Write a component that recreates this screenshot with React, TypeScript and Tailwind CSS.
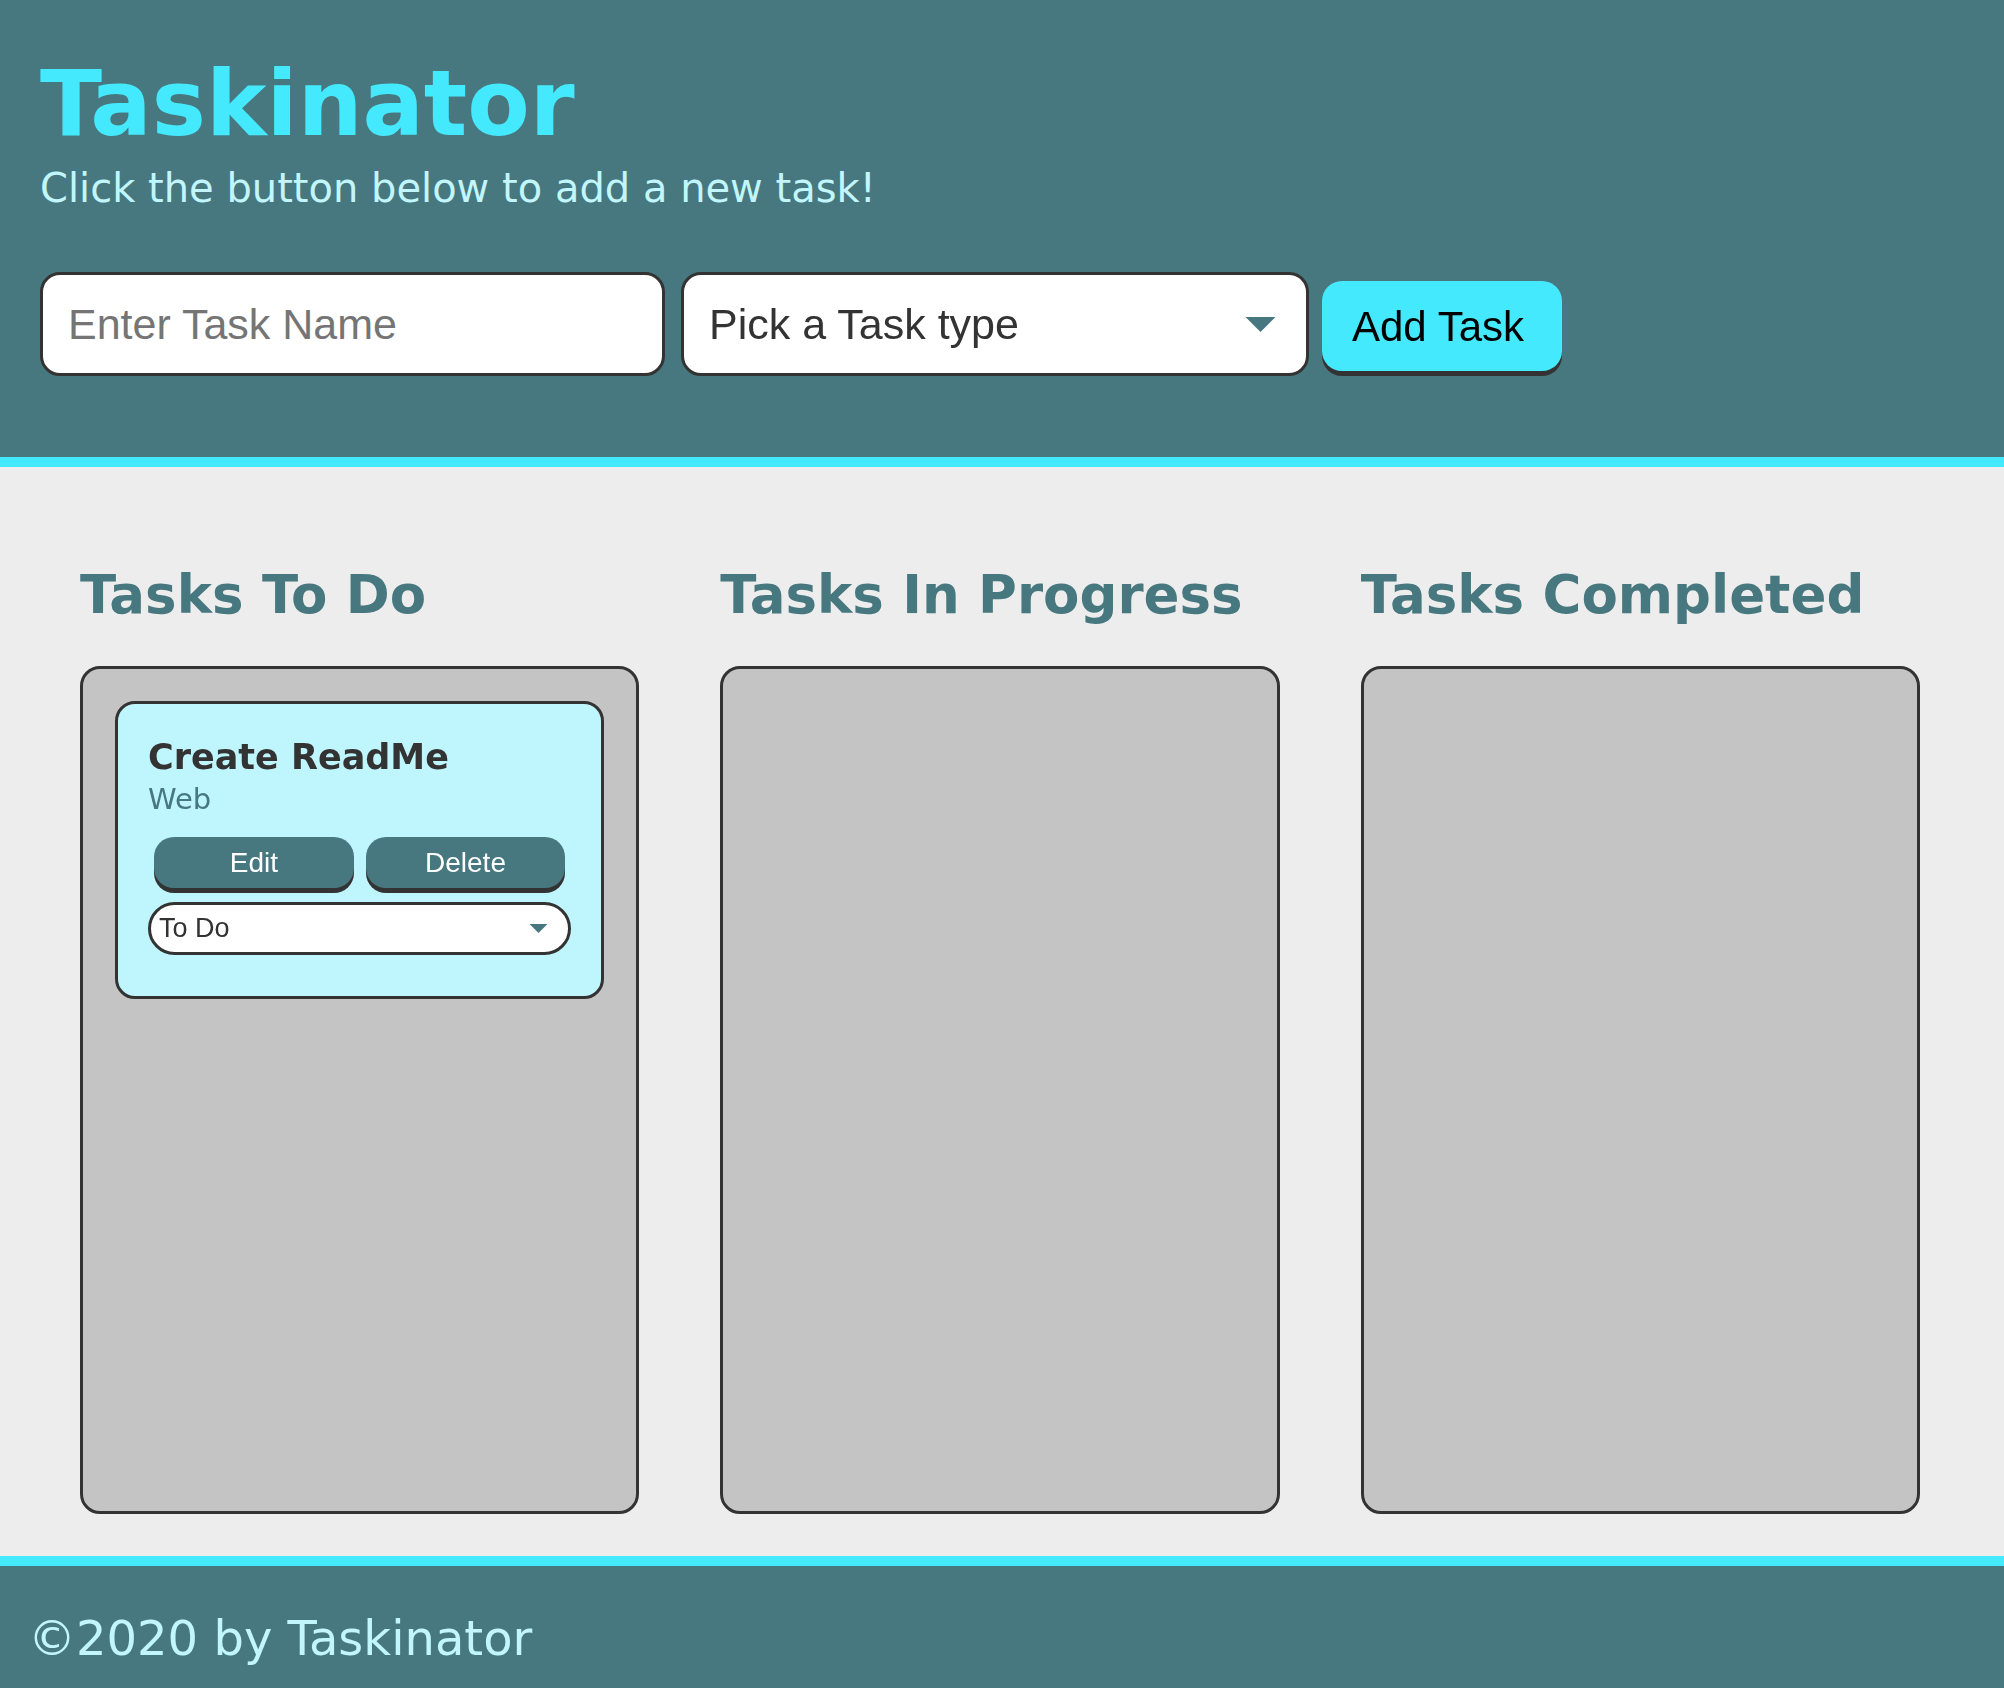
import { useState } from "react";

const columns = [
  { id: "to-do", title: "Tasks To Do" },
  { id: "in-progress", title: "Tasks In Progress" },
  { id: "completed", title: "Tasks Completed" },
];

interface Task {
  name: string;
  type: string;
  status: string;
}

function Caret({ className }: { className: string }) {
  return (
    <svg viewBox="0 0 20 10" className={className} fill="#48787f">
      <path d="M0 0h20L10 10z" />
    </svg>
  );
}

function TaskCard({ task }: { task: Task }) {
  return (
    <div className="bg-[#bff5fd] border-[3px] border-[#333] rounded-[20px] px-[30px] pt-[36px] pb-[41px]">
      <h3 className="font-['DejaVu_Sans',sans-serif] font-bold text-[35px] leading-[35px] text-[#333]">
        {task.name}
      </h3>
      <p className="mt-[10px] font-['DejaVu_Sans',sans-serif] text-[29px] leading-[29px] text-[#48787f]">
        {task.type}
      </p>
      <div className="mt-[23px] flex gap-[12px] px-[6px]">
        <button className="flex-1 h-[51px] bg-[#48787f] text-white rounded-[20px] shadow-[0_5px_0_#333] font-['Liberation_Sans',Arial,sans-serif] text-[28px]">
          Edit
        </button>
        <button className="flex-1 h-[51px] bg-[#48787f] text-white rounded-[20px] shadow-[0_5px_0_#333] font-['Liberation_Sans',Arial,sans-serif] text-[28px]">
          Delete
        </button>
      </div>
      <div className="relative mt-[14px]">
        <select
          defaultValue={task.status}
          className="appearance-none w-full h-[53px] bg-white border-[3px] border-[#333] rounded-full pl-[8px] text-[27px] text-[#333] font-['Liberation_Sans',Arial,sans-serif] focus:outline-none"
        >
          <option>To Do</option>
          <option>In Progress</option>
          <option>Completed</option>
        </select>
        <Caret className="pointer-events-none absolute right-[23px] top-[22px] w-[19px] h-[9px]" />
      </div>
    </div>
  );
}

export default function App() {
  const [tasks] = useState<Task[]>([
    { name: "Create ReadMe", type: "Web", status: "To Do" },
  ]);

  return (
    <div className="w-full min-h-screen bg-[#ededed]">
      <header className="h-[467px] bg-[#48787f] border-b-[10px] border-[#45e9fd] px-[40px] pt-[58px]">
        <h1 className="font-['DejaVu_Sans',sans-serif] font-bold text-[91px] leading-[91px] text-[#45e9fd]">
          Taskinator
        </h1>
        <p className="mt-[19px] font-['DejaVu_Sans',sans-serif] text-[40px] leading-[40px] text-[#c0f6fc]">
          Click the button below to add a new task!
        </p>
        <form className="mt-[64px] flex items-start" onSubmit={(e) => e.preventDefault()}>
          <input
            autoFocus
            type="text"
            placeholder="Enter Task Name"
            className="w-[625px] h-[104px] bg-white border-[3px] border-[#333] rounded-[20px] px-[25px] text-[43px] text-[#333] placeholder:text-[#757575] font-['Liberation_Sans',Arial,sans-serif] focus:outline-none"
          />
          <div className="relative ml-[16px]">
            <select
              defaultValue=""
              className="appearance-none w-[628px] h-[104px] bg-white border-[3px] border-[#333] rounded-[20px] pl-[25px] text-[43px] text-[#333] font-['Liberation_Sans',Arial,sans-serif] focus:outline-none"
            >
              <option value="" disabled>
                Pick a Task type
              </option>
              <option>Web</option>
              <option>Mobile</option>
              <option>Print</option>
            </select>
            <Caret className="pointer-events-none absolute right-[33px] top-[45px] w-[31px] h-[15px]" />
          </div>
          <button
            type="submit"
            className="ml-[13px] mt-[9px] w-[240px] h-[90px] pl-[30px] text-left bg-[#45e9fd] text-black rounded-[20px] shadow-[0_5px_0_#333] text-[42px] font-['Liberation_Sans',Arial,sans-serif]"
          >
            Add Task
          </button>
        </form>
      </header>

      <main className="h-[1089px] pt-[101px] pl-[80px] pr-[84px] grid grid-cols-3 gap-x-[81px] items-start">
        {columns.map((col) => (
          <section key={col.id}>
            <h2 className="font-['DejaVu_Sans',sans-serif] font-bold text-[53px] leading-[53px] text-[#48787f] whitespace-nowrap">
              {col.title}
            </h2>
            <div className="mt-[45px] h-[848px] bg-[#c4c4c4] border-[3px] border-[#333] rounded-[20px] p-[32px]">
              {col.id === "to-do" &&
                tasks.map((t) => <TaskCard key={t.name} task={t} />)}
            </div>
          </section>
        ))}
      </main>

      <footer className="h-[132px] bg-[#48787f] border-t-[10px] border-[#45e9fd] px-[28px] pt-[48px]">
        <p className="font-['DejaVu_Sans',sans-serif] text-[48px] leading-[48px] text-[#c0f6fc]">
          ©2020 by Taskinator
        </p>
      </footer>
    </div>
  );
}
